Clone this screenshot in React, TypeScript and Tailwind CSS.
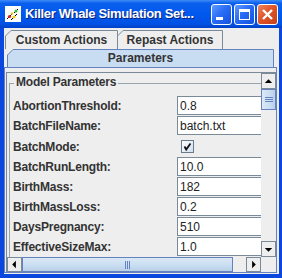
import React from "react";

const FONT = { fontFamily: '"Liberation Sans", Arial, sans-serif' };

function TabShape({
  width,
  height,
  stroke,
  fill,
  label,
  className,
}: {
  width: number;
  height: number;
  stroke: string;
  fill: string;
  label: string;
  className?: string;
}) {
  const w = width - 0.5;
  const d = `M0.5 ${height} L0.5 6 L6 0.5 L${w} 0.5 L${w} ${height}`;
  return (
    <div
      className={`relative flex items-center justify-center ${className ?? ""}`}
      style={{ width, height }}
    >
      <svg className="absolute inset-0" width={width} height={height}>
        <path d={d + " Z"} fill={fill} stroke="none" />
        <path d={d} fill="none" stroke={stroke} strokeWidth={1} />
      </svg>
      <span className="relative text-[12px] font-bold text-[#333333] leading-none">
        {label}
      </span>
    </div>
  );
}

function XpButton({ kind }: { kind: "min" | "max" | "close" }) {
  const bg =
    kind === "close"
      ? "bg-[linear-gradient(135deg,#f0855c_0%,#e0552a_45%,#c4401a_100%)]"
      : "bg-[linear-gradient(135deg,#5f9cff_0%,#2a6cf5_45%,#1450e0_100%)]";
  return (
    <div
      className={`w-[21px] h-[21px] rounded-[3px] border border-white flex items-center justify-center ${bg}`}
    >
      <svg width="19" height="19" viewBox="0 0 19 19">
        {kind === "min" && <rect x="4" y="12" width="7" height="3" fill="white" />}
        {kind === "max" && (
          <>
            <rect x="4.5" y="4.5" width="10" height="10" fill="none" stroke="white" />
            <rect x="4" y="4" width="11" height="3" fill="white" />
          </>
        )}
        {kind === "close" && (
          <path d="M5 5 L14 14 M14 5 L5 14" stroke="white" strokeWidth="2.4" />
        )}
      </svg>
    </div>
  );
}

function TitleBar() {
  return (
    <div className="h-[28px] flex items-center bg-[linear-gradient(180deg,#3d8af7_0%,#0a5fed_12%,#0058ee_50%,#0052e4_85%,#0041c8_100%)] pl-[5px] pr-[4px]">
      <svg width="16" height="16" viewBox="0 0 16 16" className="shrink-0">
        <rect x="0" y="0" width="16" height="16" fill="white" />
        <path d="M2 13 L7 8 M6 14 L12 8 M9 7 L13 3" stroke="black" strokeWidth="1" />
        <circle cx="4.5" cy="10.5" r="1.6" fill="#e02020" />
        <circle cx="9" cy="11" r="1.5" fill="#e8d000" />
        <circle cx="11" cy="5" r="1.5" fill="#30c030" />
        <circle cx="7" cy="7.5" r="1.2" fill="#e8d000" />
      </svg>
      <span className="ml-[4px] text-white font-bold text-[13px] tracking-[-0.35px] [text-shadow:1px_1px_0_#0a1f7a] whitespace-nowrap flex-1">
        Killer Whale Simulation Set...
      </span>
      <div className="flex gap-[2px]">
        <XpButton kind="min" />
        <XpButton kind="max" />
        <XpButton kind="close" />
      </div>
    </div>
  );
}

const params: [string, string | null][] = [
  ["AbortionThreshold:", "0.8"],
  ["BatchFileName:", "batch.txt"],
  ["BatchMode:", null],
  ["BatchRunLength:", "10.0"],
  ["BirthMass:", "182"],
  ["BirthMassLoss:", "0.2"],
  ["DaysPregnancy:", "510"],
  ["EffectiveSizeMax:", "1.0"],
];

function ParamRow({ label, value }: { label: string; value: string | null }) {
  return (
    <div className={`flex items-center ${value === null ? "h-[21px]" : "h-[20px]"}`}>
      <div className="w-[167px] shrink-0 pl-[3px] text-[12px] font-bold text-[#333333] tracking-[-0.2px] whitespace-nowrap">
        {label}
      </div>
      {value === null ? (
        <div className="w-[110px] shrink-0 flex justify-start pl-[4px]">
          <div className="w-[13px] h-[13px] shrink-0 border border-[#6b7b8c] bg-[linear-gradient(135deg,#ffffff_0%,#cfdff0_100%)]">
            <svg width="11" height="11" viewBox="0 0 11 11" className="block">
              <path d="M2.5 5.5 L4.2 8.5 L8.5 2.5" stroke="#111" strokeWidth="1.8" fill="none" />
            </svg>
          </div>
        </div>
      ) : (
        <div className="w-[110px] h-[19px] mb-[1px] shrink-0 border border-[#7a8a99] bg-white flex items-center pl-[2px] text-[12px] text-[#222222] leading-none">
          {value}
        </div>
      )}
    </div>
  );
}

function ArrowButton({ dir, className }: { dir: "up" | "down" | "left" | "right"; className?: string }) {
  const pts = {
    up: "3,6 7,2 11,6",
    down: "3,3 11,3 7,7",
    left: "6,3 6,11 2,7",
    right: "3,3 3,11 7,7",
  }[dir];
  const vertical = dir === "up" || dir === "down";
  return (
    <div
      className={`shrink-0 bg-[#eeeeee] border border-[#7a8a99] flex items-center justify-center ${
        vertical ? "w-[15px] h-[16px]" : "w-[15px] h-[15px]"
      } ${className ?? ""}`}
    >
      <svg width={vertical ? 13 : 9} height={vertical ? 9 : 13} viewBox={vertical ? "0 0 14 9" : "0 0 9 14"}>
        <polygon points={pts} fill="black" />
      </svg>
    </div>
  );
}

export default function App() {
  return (
    <div className="w-[282px] h-[278px] flex flex-col bg-[#0a47df] overflow-hidden" style={FONT}>
      <TitleBar />
      <div className="flex-1 flex pl-[4px] pr-[3px] pb-[4px]">
        <div className="flex-1 bg-[#eeeeee] flex flex-col pt-[2px]">
          <div className="flex h-[19px] pl-[1px]">
            <TabShape width={113} height={19} stroke="#7a8a99" fill="#eeeeee" label="Custom Actions" />
            <TabShape width={106} height={19} stroke="#7a8a99" fill="#eeeeee" label="Repast Actions" className="-ml-[1px]" />
          </div>
          <div className="flex h-[18px] pl-[3px]">
            <TabShape width={267} height={18} stroke="#6382bf" fill="#c8ddf2" label="Parameters" />
          </div>
          <div className="w-[273px] h-[206px] border border-[#6382bf] pl-[1px] pt-[4px] flex flex-col">
            <div className="flex-1 flex flex-col border-l border-t border-[#7a8a99]">
              <div className="flex h-[184px]">
                <div className="w-[254px] overflow-hidden pl-[2px] pt-[4px]">
                  <div className="w-[272px] border border-[#9aa4ae] border-b-0 border-r-0 mt-[6px] pt-[12px] relative">
                    <span className="absolute -top-[8px] left-[4px] bg-[#eeeeee] px-[2px] text-[12px] font-bold text-[#333333] leading-none tracking-[-0.2px]">
                      Model Parameters
                    </span>
                    <div className="flex flex-col">
                      {params.map(([l, v]) => (
                        <ParamRow key={l} label={l} value={v} />
                      ))}
                    </div>
                  </div>
                </div>
                <div className="w-[15px] flex flex-col bg-[#eeeeee]">
                  <ArrowButton dir="up" />
                  <div className="h-[21px] border border-[#6382bf] bg-[linear-gradient(90deg,#dbe8f6_0%,#c8ddf2_60%,#b8cfe5_100%)] flex flex-col items-center justify-center gap-[1px]">
                    <div className="w-[8px] h-[1px] bg-[#6382bf]" />
                    <div className="w-[8px] h-[1px] bg-[#6382bf]" />
                    <div className="w-[8px] h-[1px] bg-[#6382bf]" />
                  </div>
                  <div className="flex-1" />
                  <ArrowButton dir="down" />
                </div>
              </div>
              <div className="flex h-[15px]">
                <ArrowButton dir="left" />
                <div className="w-[211px] border border-[#6382bf] bg-[linear-gradient(180deg,#dbe8f6_0%,#c8ddf2_60%,#b8cfe5_100%)] flex items-center justify-center gap-[1px]">
                  <div className="w-[1px] h-[8px] bg-[#6382bf]" />
                  <div className="w-[1px] h-[8px] bg-[#6382bf]" />
                  <div className="w-[1px] h-[8px] bg-[#6382bf]" />
                </div>
                <div className="flex-1" />
                <ArrowButton dir="right" />
                <div className="w-[15px] bg-[#eeeeee]" />
              </div>
            </div>
          </div>
        </div>
      </div>
    </div>
  );
}
